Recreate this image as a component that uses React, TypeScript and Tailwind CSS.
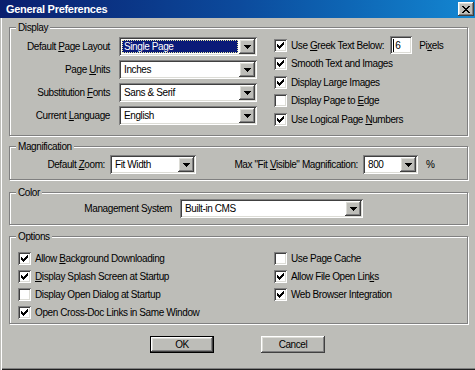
import React from "react";

const SUNKEN =
  "shadow-[inset_1px_1px_0_#808080,inset_-1px_-1px_0_#ffffff,inset_2px_2px_0_#404040,inset_-2px_-2px_0_#dcdcd6]";
const RAISED =
  "shadow-[inset_-1px_-1px_0_#404040,inset_1px_1px_0_#ffffff,inset_-2px_-2px_0_#808080,inset_2px_2px_0_#dcdcd6]";

function Tri() {
  return (
    <svg width="7" height="4" viewBox="0 0 7 4" shapeRendering="crispEdges">
      <path d="M0 0h7v1h-1v1h-1v1h-1v1h-1v-1h-1v-1h-1v-1h-1z" fill="#000" />
    </svg>
  );
}

function CheckMark() {
  return (
    <svg width="7" height="7" viewBox="0 0 7 7" shapeRendering="crispEdges">
      <path
        d="M6 0h1v1h-1z M5 1h2v1h-2z M0 2h1v1h-1z M4 2h3v1h-3z M0 3h2v1h-2z M3 3h3v1h-3z M0 4h5v1h-5z M1 5h3v1h-3z M2 6h1v1h-1z"
        fill="#000"
      />
    </svg>
  );
}

function Select({ cls, text, selected }: { cls: string; text: string; selected?: boolean }) {
  return (
    <div className={`flex h-[19px] shrink-0 bg-white p-[2px] ${SUNKEN} ${cls}`}>
      <div className="flex min-w-0 flex-1 items-center pl-[1px] pr-[1px]">
        {selected ? (
          <div className="flex h-[13px] flex-1 items-center bg-[#0a1a78] pl-[2px] text-white outline-1 outline-dotted outline-[#e8e8a0] -outline-offset-1">
            {text}
          </div>
        ) : (
          <span className="pl-[2px]">{text}</span>
        )}
      </div>
      <div className={`flex h-[15px] w-[16px] items-center justify-center bg-[#bdbdb8] ${RAISED}`}>
        <Tri />
      </div>
    </div>
  );
}

function Check({ checked }: { checked?: boolean }) {
  return (
    <div className={`flex h-[13px] w-[13px] shrink-0 items-center justify-center bg-white ${SUNKEN}`}>
      {checked && <CheckMark />}
    </div>
  );
}

function CheckRow({ checked, children, cls }: { checked?: boolean; children: React.ReactNode; cls: string }) {
  return (
    <div className={`flex items-center gap-[4px] ${cls}`}>
      <Check checked={checked} />
      <span className="whitespace-nowrap">{children}</span>
    </div>
  );
}

function Group({ label, cls, children }: { label: string; cls: string; children: React.ReactNode }) {
  return (
    <div
      className={`relative w-[459px] border border-[#808080] shadow-[1px_1px_0_#ffffff,inset_1px_1px_0_#ffffff] ${cls}`}
    >
      <span className="absolute -top-[7px] left-[6px] bg-[#bdbdb8] px-[2px] leading-[13px]">{label}</span>
      {children}
    </div>
  );
}

function U({ children }: { children: React.ReactNode }) {
  return <span className="underline underline-offset-1">{children}</span>;
}

export default function App() {
  return (
    <div className="flex h-[370px] w-[475px] flex-col overflow-hidden bg-[#bdbdb8] font-['Liberation_Sans',Arial,sans-serif] text-[10px] leading-[13px] tracking-[-0.4px] text-black">
      {/* Title bar */}
      <div className="flex h-[18px] shrink-0 items-center justify-between bg-gradient-to-r from-[#0a1e6e] via-[#0c4a9c] to-[#1487d2] pl-[6px] pr-[1px]">
        <span className="text-[11px] font-bold tracking-[-0.3px] text-white">General Preferences</span>
        <div className={`flex h-[14px] w-[16px] items-center justify-center bg-[#bdbdb8] ${RAISED}`}>
          <svg width="8" height="7" viewBox="0 0 8 7" shapeRendering="crispEdges">
            <path
              d="M0 0h2v1h-2z M6 0h2v1h-2z M1 1h2v1h-2z M5 1h2v1h-2z M2 2h4v1h-4z M3 3h2v1h-2z M2 4h4v1h-4z M1 5h2v1h-2z M5 5h2v1h-2z M0 6h2v1h-2z M6 6h2v1h-2z"
              fill="#000"
            />
          </svg>
        </div>
      </div>

      {/* Body */}
      <div className="flex flex-1 flex-col pl-[9px] shadow-[inset_1px_0_0_#bdbdb8,inset_2px_0_0_#ffffff,inset_0_-1px_0_#202020,inset_0_-2px_0_#808080]">
        {/* Display */}
        <Group label="Display" cls="mt-[9px] h-[109px]">
          <div className="flex">
            <div className="flex flex-col gap-[4px] pt-[9px]">
              {[
                ["Default ", "P", "age Layout", "Single Page", true],
                ["Page ", "U", "nits", "Inches", false],
                ["Substitution ", "F", "onts", "Sans & Serif", false],
                ["Current ", "L", "anguage", "English", false],
              ].map(([a, b, c, v, s]) => (
                <div key={String(a) + c} className="flex h-[19px] items-center">
                  <span className="w-[100px] whitespace-nowrap text-right">
                    {a}
                    <U>{b}</U>
                    {c}
                  </span>
                  <Select cls="ml-[9px] w-[138px]" text={String(v)} selected={Boolean(s)} />
                </div>
              ))}
            </div>
            <div className="ml-[17px] flex flex-col pt-[8px]">
              <div className="flex h-[18.5px] items-center">
                <CheckRow checked cls="">
                  Use <U>G</U>reek Text Below:
                </CheckRow>
                <div className={`ml-[6px] flex h-[18px] w-[22px] items-center bg-white pl-[3px] ${SUNKEN}`}>
                  <span className="border-l border-black pl-[1px]">6</span>
                </div>
                <span className="ml-[7px]">
                  Pi<U>x</U>els
                </span>
              </div>
              <CheckRow checked cls="h-[18.5px]">
                Smooth Text and Images
              </CheckRow>
              <CheckRow checked cls="h-[18.5px]">
                Display Large Images
              </CheckRow>
              <CheckRow cls="h-[18.5px]">
                Display Page to <U>E</U>dge
              </CheckRow>
              <CheckRow checked cls="h-[18.5px]">
                Use Logical Page <U>N</U>umbers
              </CheckRow>
            </div>
          </div>
        </Group>

        {/* Magnification */}
        <Group label="Magnification" cls="mt-[10px] h-[34px]">
          <div className="flex items-center pt-[8px]">
            <span className="w-[95px] whitespace-nowrap text-right">
              Default <U>Z</U>oom:
            </span>
            <Select cls="ml-[5px] w-[86px]" text="Fit Width" />
            <span className="ml-[38px] w-[124px] whitespace-nowrap text-right">
              Max &quot;Fit <U>V</U>isible&quot; Magnification:
            </span>
            <Select cls="ml-[5px] w-[55px]" text="800" />
            <span className="ml-[8px]">%</span>
          </div>
        </Group>

        {/* Color */}
        <Group label="Color" cls="mt-[12px] h-[33px]">
          <div className="flex items-center pt-[6px]">
            <span className="w-[162px] whitespace-nowrap text-right">Management System</span>
            <Select cls="ml-[8px] w-[183px]" text="Built-in CMS" />
          </div>
        </Group>

        {/* Options */}
        <Group label="Options" cls="mt-[11px] h-[88px]">
          <div className="flex pl-[8px] pt-[12px]">
            <div className="flex w-[256px] flex-col">
              <CheckRow checked cls="h-[18px]">
                Allow <U>B</U>ackground Downloading
              </CheckRow>
              <CheckRow checked cls="h-[18px]">
                <U>D</U>isplay Splash Screen at Startup
              </CheckRow>
              <CheckRow cls="h-[18px]">Display Open Dialog at Startup</CheckRow>
              <CheckRow checked cls="h-[18px]">
                Open Cross-Doc Links in Same Window
              </CheckRow>
            </div>
            <div className="flex flex-col">
              <CheckRow cls="h-[18px]">Use Page Cache</CheckRow>
              <CheckRow checked cls="h-[18px]">
                Allow File Open Lin<U>k</U>s
              </CheckRow>
              <CheckRow checked cls="h-[18px]">
                Web Browser Integration
              </CheckRow>
            </div>
          </div>
        </Group>

        {/* Buttons */}
        <div className="mt-[12px] flex justify-center gap-[47px] pr-[9px]">
          <div className="flex h-[17px] w-[64px] items-center justify-center border border-black">
            <div className={`flex h-full w-full items-center justify-center bg-[#bdbdb8] ${RAISED}`}>OK</div>
          </div>
          <div className={`flex h-[17px] w-[64px] items-center justify-center bg-[#bdbdb8] ${RAISED}`}>Cancel</div>
        </div>
      </div>
    </div>
  );
}
